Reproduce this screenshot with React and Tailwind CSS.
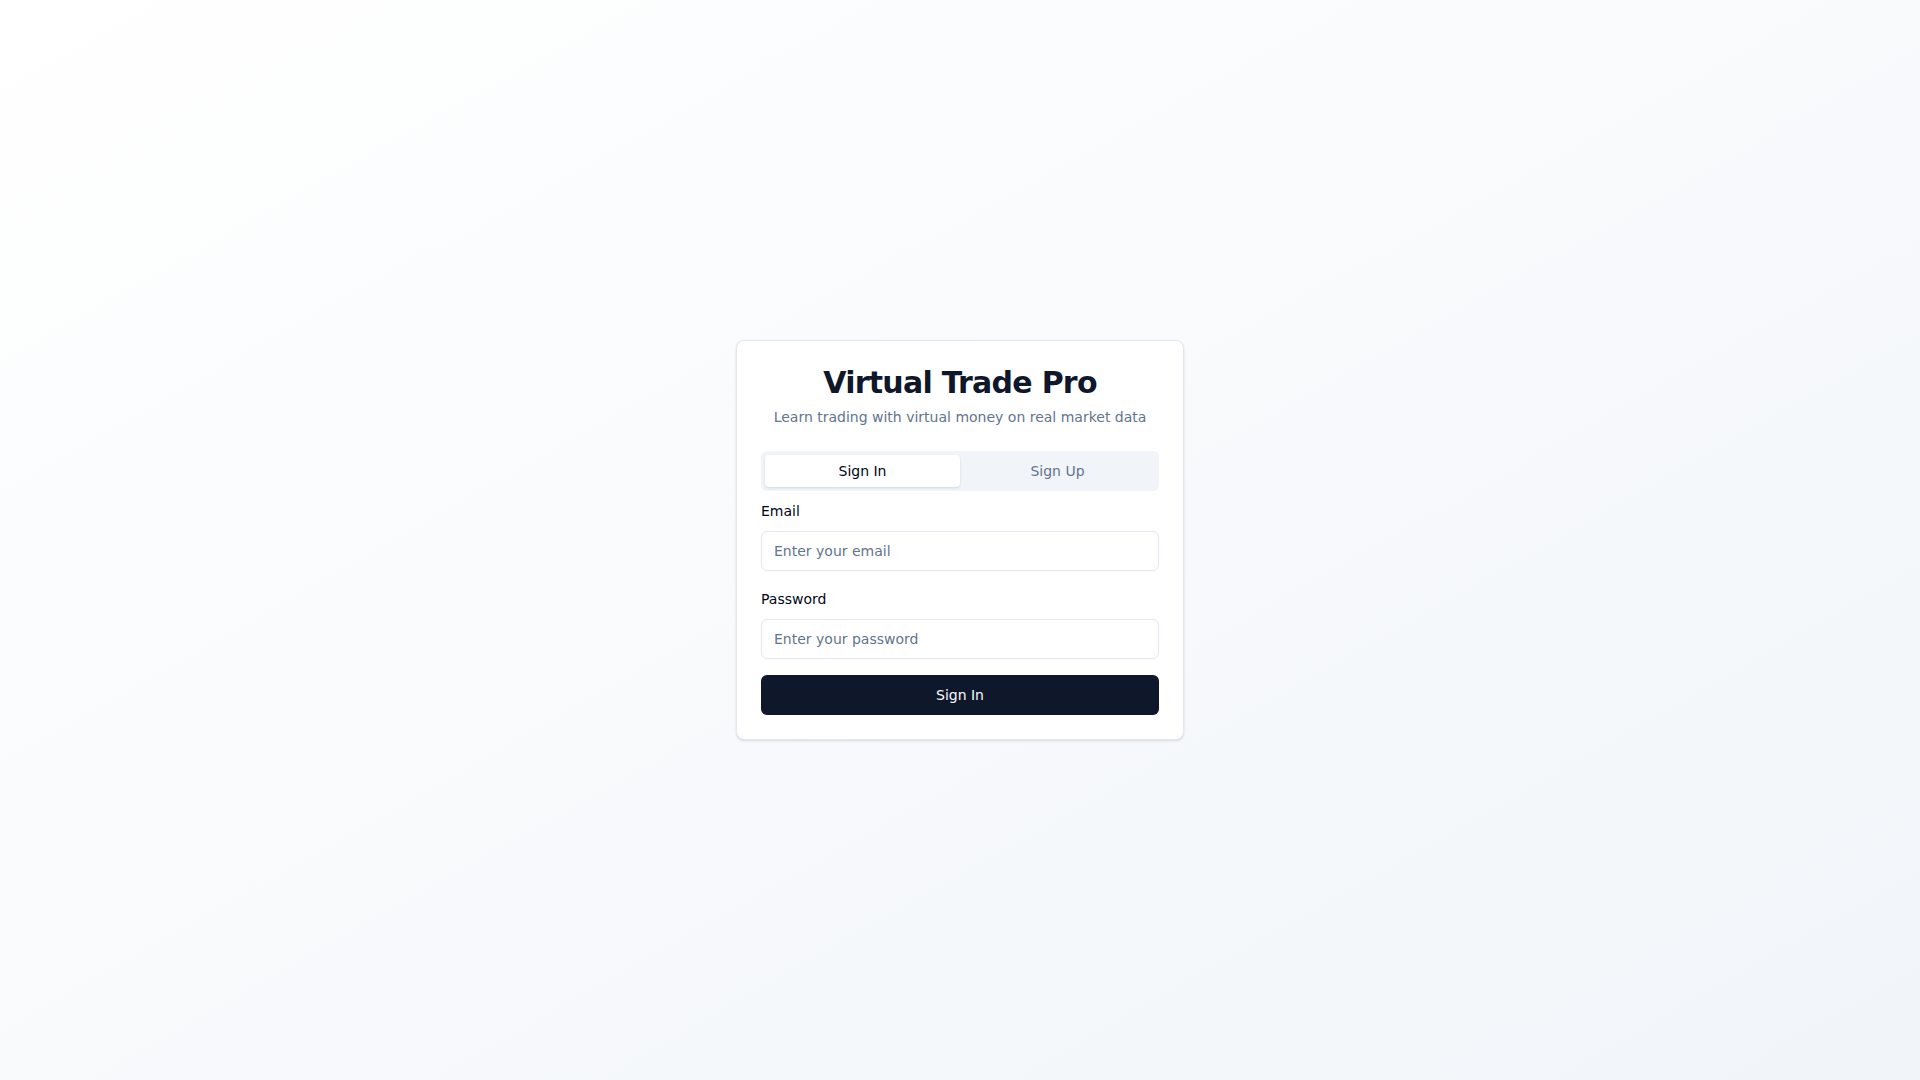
import React, { useState } from "react";

export default function App() {
  const [tab, setTab] = useState("signin");
  return (
    <div
      className="min-h-screen w-full flex items-center justify-center bg-gradient-to-br from-white to-slate-100 p-4 text-slate-950"
      style={{ fontFamily: '"DejaVu Sans", "Liberation Sans", sans-serif' }}
    >
      <div className="w-full max-w-md rounded-lg border border-slate-200 bg-white shadow-sm">
        <div className="flex flex-col space-y-1.5 p-6 text-center">
          <h1 className="text-3xl font-bold leading-9 tracking-tight text-slate-900">Virtual Trade Pro</h1>
          <p className="text-sm text-slate-500">Learn trading with virtual money on real market data</p>
        </div>
        <div className="p-6 pt-0">
          <div className="grid h-10 w-full grid-cols-2 items-center rounded-md bg-slate-100 p-1 text-slate-500">
            <button
              onClick={() => setTab("signin")}
              className={
                tab === "signin"
                  ? "inline-flex items-center justify-center rounded-sm px-3 py-1.5 text-sm font-medium bg-white text-slate-950 shadow-sm"
                  : "inline-flex items-center justify-center rounded-sm px-3 py-1.5 text-sm font-medium text-slate-500"
              }
            >
              Sign In
            </button>
            <button
              onClick={() => setTab("signup")}
              className={
                tab === "signup"
                  ? "inline-flex items-center justify-center rounded-sm px-3 py-1.5 text-sm font-medium bg-white text-slate-950 shadow-sm"
                  : "inline-flex items-center justify-center rounded-sm px-3 py-1.5 text-sm font-medium text-slate-500"
              }
            >
              Sign Up
            </button>
          </div>
          <form className="mt-2 space-y-4" onSubmit={(e) => e.preventDefault()}>
            <div className="space-y-2">
              <label className="block text-sm font-medium leading-6">Email</label>
              <input
                type="email"
                placeholder="Enter your email"
                className="flex h-10 w-full rounded-md border border-slate-200 bg-white px-3 py-2 text-sm placeholder:text-slate-500 outline-none"
              />
            </div>
            <div className="space-y-2">
              <label className="block text-sm font-medium leading-6">Password</label>
              <input
                type="password"
                placeholder="Enter your password"
                className="flex h-10 w-full rounded-md border border-slate-200 bg-white px-3 py-2 text-sm placeholder:text-slate-500 outline-none"
              />
            </div>
            <button
              type="submit"
              className="inline-flex h-10 w-full items-center justify-center rounded-md bg-slate-900 px-4 py-2 text-sm font-medium text-slate-50"
            >
              Sign In
            </button>
          </form>
        </div>
      </div>
    </div>
  );
}
